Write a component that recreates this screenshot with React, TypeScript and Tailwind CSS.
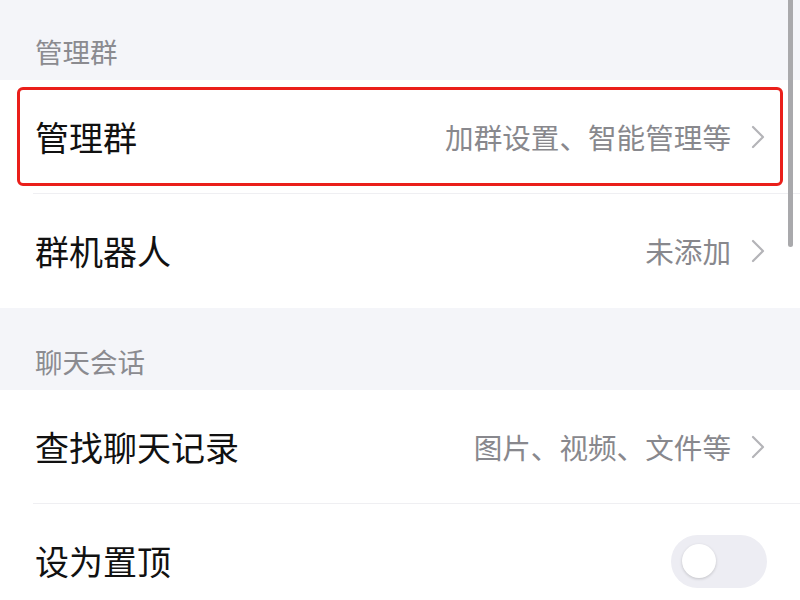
import React from "react"

const font = { fontFamily: '"Noto Sans CJK SC", "Noto Sans", sans-serif' }

function Chevron() {
  return (
    <svg width="14" height="24" viewBox="0 0 14 24" className="ml-[20px] shrink-0">
      <path d="M2 2 L12 12 L2 22" fill="none" stroke="#b4b4b8" strokeWidth="2.2" strokeLinecap="round" strokeLinejoin="round" />
    </svg>
  )
}

function SectionHeader({ title }: { title: string }) {
  return (
    <div className="flex h-[80px] items-end bg-[#f4f5f9] pb-[15px] pl-[35px]">
      <span className="text-[27.5px] leading-none text-[#8b8b90]">{title}</span>
    </div>
  )
}

function Row({
  title,
  value,
  divider,
  highlighted,
  children,
}: {
  title: string
  value?: string
  divider?: boolean
  highlighted?: boolean
  children?: React.ReactNode
}) {
  return (
    <div className="relative flex h-[114px] items-center bg-white pl-[35px] pr-[35px]">
      <span className="flex-1 text-[34px] leading-none text-[#111111]">{title}</span>
      {value ? (
        <div className="flex items-center">
          <span className="text-[28.6px] leading-none text-[#88888d]">{value}</span>
          <Chevron />
        </div>
      ) : null}
      {children}
      {divider ? <div className="absolute bottom-0 left-[33px] right-0 h-px bg-[#efeff2]" /> : null}
      {highlighted ? (
        <div className="pointer-events-none absolute bottom-[8px] left-[17px] right-[17px] top-[7px] rounded-[6px] border-[3px] border-[#ea1f1a]" />
      ) : null}
    </div>
  )
}

function Toggle() {
  return (
    <div className="mr-[-2px] flex h-[53px] w-[96px] items-center rounded-full bg-[#ededf3] pl-[11px]">
      <div className="h-[34px] w-[34px] rounded-full bg-white shadow-[0_1px_3px_rgba(0,0,0,0.18)]" />
    </div>
  )
}

export default function App() {
  return (
    <div className="relative h-[600px] w-[800px] overflow-hidden bg-white" style={font}>
      <SectionHeader title="管理群" />
      <Row title="管理群" value="加群设置、智能管理等" divider highlighted />
      <Row title="群机器人" value="未添加" />
      <div className="h-[2px] bg-[#f4f5f9]" />
      <SectionHeader title="聊天会话" />
      <Row title="查找聊天记录" value="图片、视频、文件等" divider />
      <Row title="设为置顶">
        <Toggle />
      </Row>
      {/* scrollbar */}
      <div className="absolute right-[7px] top-0 h-[247px] w-[5px] rounded-b-full bg-[#a9a9ac]" />
    </div>
  )
}
